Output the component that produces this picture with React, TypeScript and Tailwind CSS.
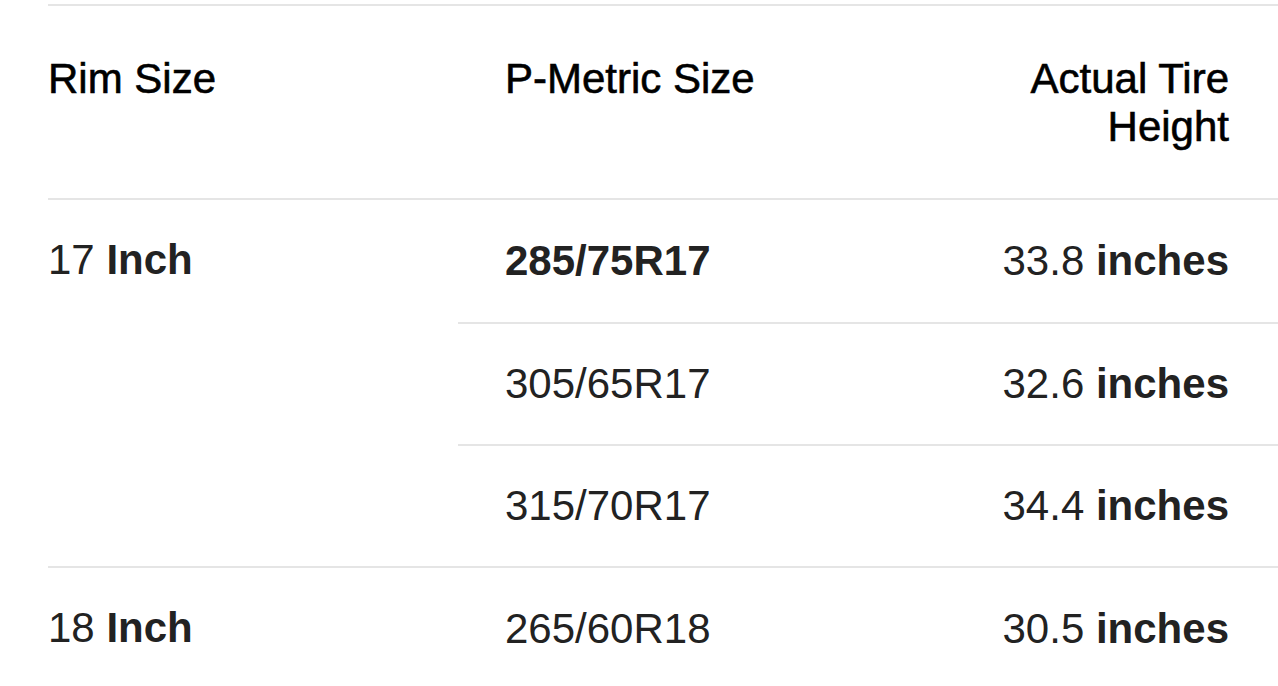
import React from "react";

interface SubRow {
  size: string;
  height: string;
  boldSize?: boolean;
}

interface RimGroup {
  rim: string;
  rows: SubRow[];
}

const groups: RimGroup[] = [
  {
    rim: "17",
    rows: [
      { size: "285/75R17", height: "33.8", boldSize: true },
      { size: "305/65R17", height: "32.6" },
      { size: "315/70R17", height: "34.4" },
    ],
  },
  {
    rim: "18",
    rows: [{ size: "265/60R18", height: "30.5" }],
  },
];

const App: React.FC = () => {
  return (
    <div className="w-[1278px] h-[686px] overflow-hidden bg-white pt-[4px] font-['Liberation_Sans',Arial,sans-serif] text-[42px] leading-[48px]">
      <div className="ml-[48px] border-t-2 border-[#e5e5e5]">
        {/* header */}
        <div className="flex h-[192px] items-start pt-[49px] text-black [-webkit-text-stroke:0.6px_black]">
          <div className="w-[410px]">Rim Size</div>
          <div className="flex-1 pl-[47px]">P-Metric Size</div>
          <div className="w-[310px] pr-[49px] text-right">Actual Tire Height</div>
        </div>

        {groups.map((group) => (
          <div key={group.rim} className="flex border-t-2 border-[#e5e5e5] text-[#222]">
            <div className="w-[410px] h-[120px] flex items-center">
              <span>
                {group.rim} <b>Inch</b>
              </span>
            </div>
            <div className="flex-1 flex flex-col">
              {group.rows.map((row, i) => (
                <div
                  key={row.size}
                  className={`flex h-[122px] items-center ${i > 0 ? "border-t-2 border-[#e5e5e5]" : "h-[120px]"}`}
                >
                  <div className={`flex-1 pl-[47px] ${row.boldSize ? "font-bold" : ""}`}>{row.size}</div>
                  <div className="w-[310px] pr-[49px] text-right">
                    {row.height} <b>inches</b>
                  </div>
                </div>
              ))}
            </div>
          </div>
        ))}
      </div>
    </div>
  );
};

export default App;
